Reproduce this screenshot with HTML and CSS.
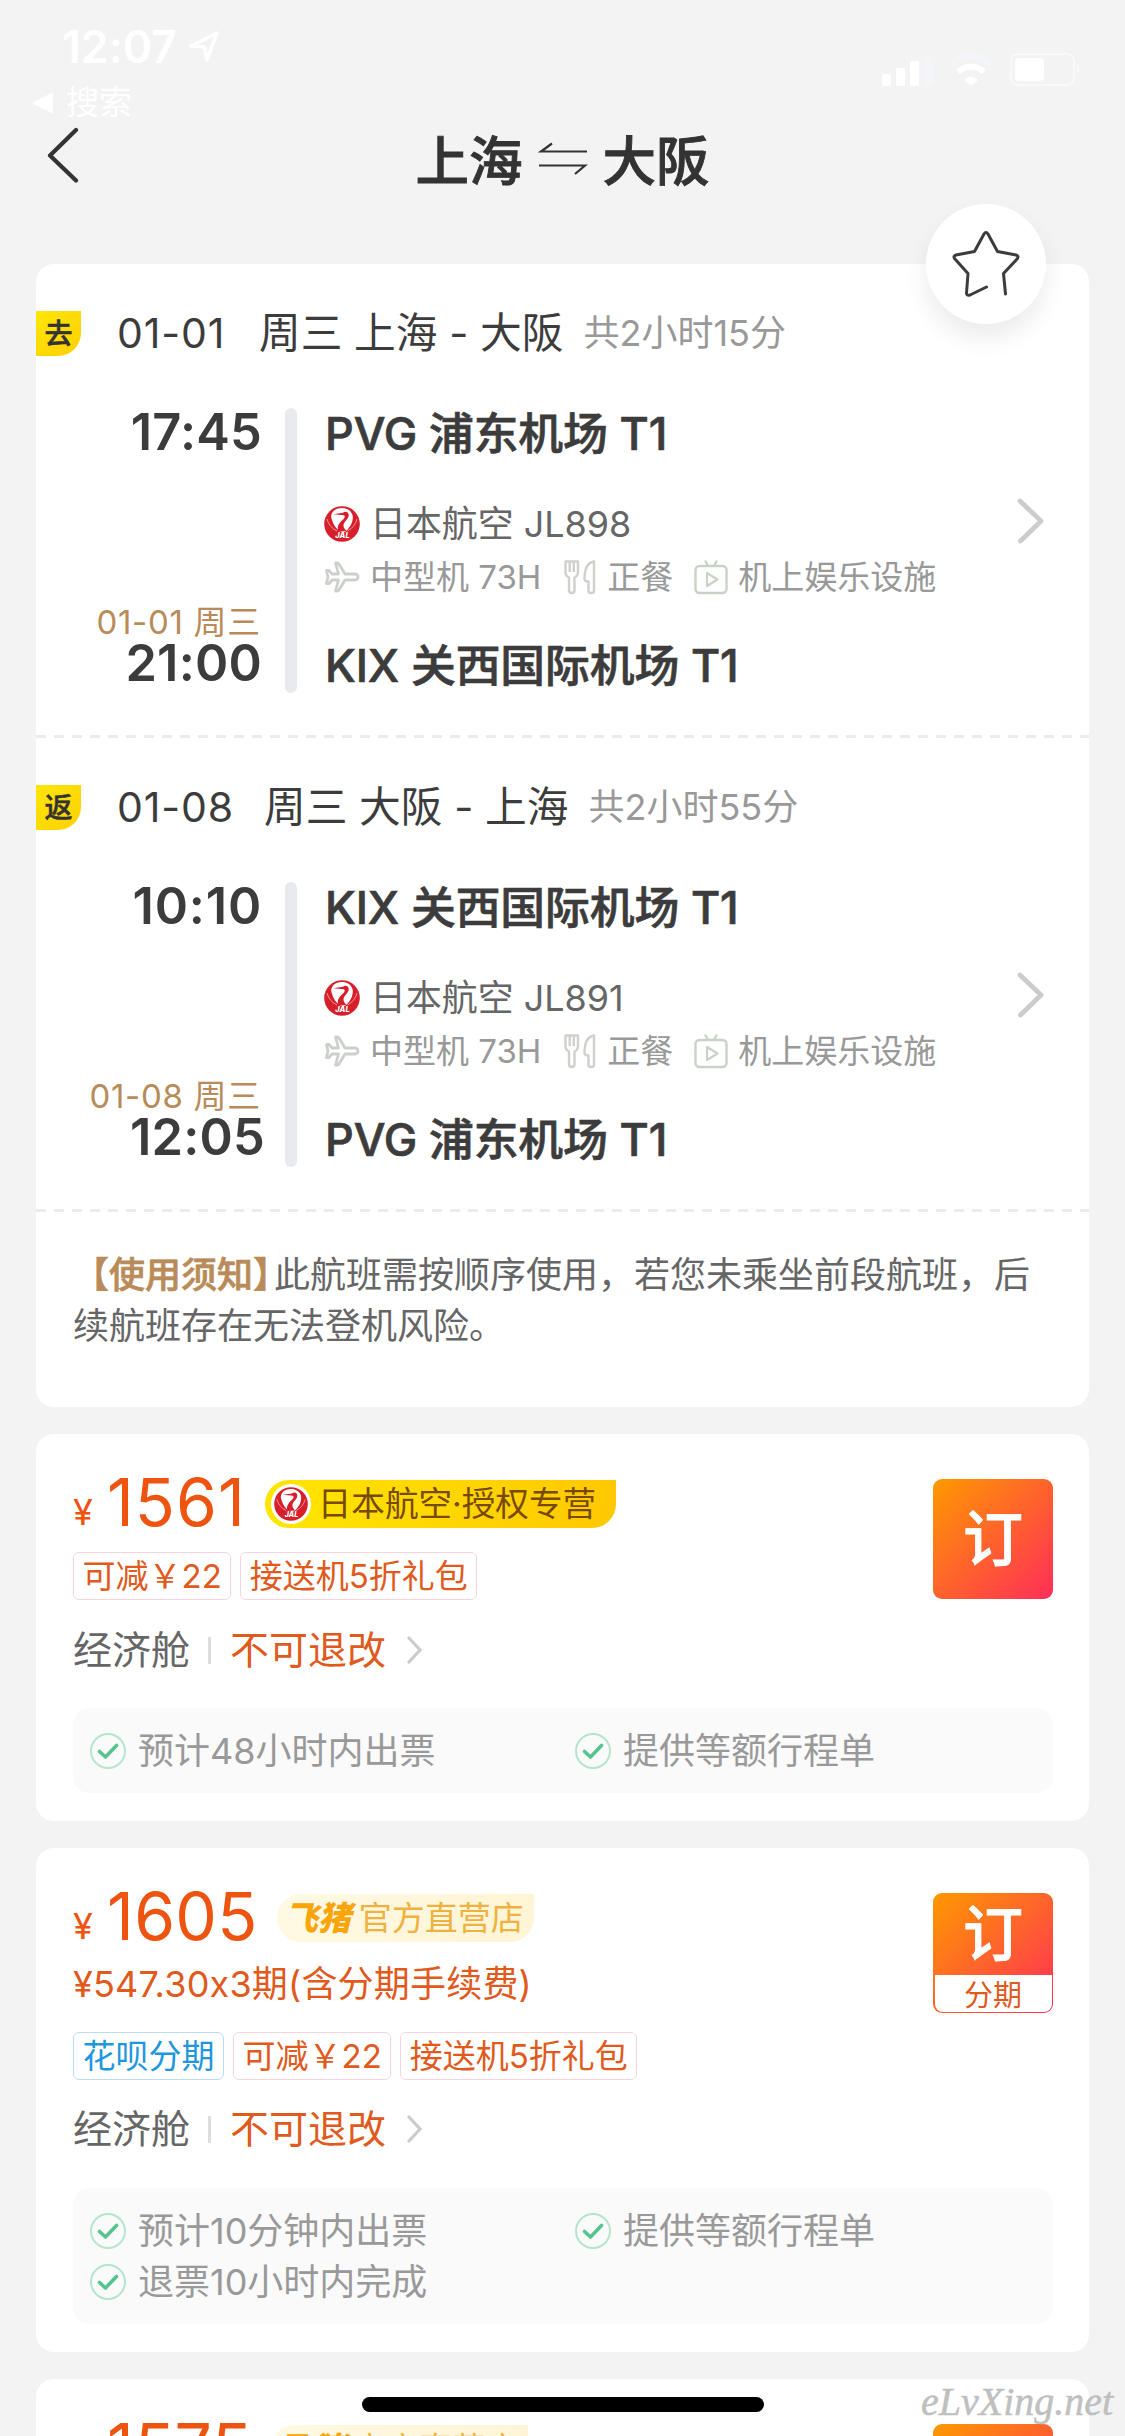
FILE: index.html
```html
<!DOCTYPE html>
<html lang="zh-CN">
<head>
<meta charset="utf-8">
<title>上海 - 大阪</title>
<link rel="stylesheet" href="styles.css">
</head>
<body>
<svg width="0" height="0" class="defs">
  <defs>
    <symbol id="jal" viewBox="0 0 36 36">
      <circle cx="18" cy="18" r="17.800" fill="#d71f2b"/>
      <path d="M18 2C9.500 2 5.500 8 8 14C9.500 19 12 22.500 15.500 25C19.500 27 21 26.500 24 23C28 18.500 29.500 13 28.500 9C27 4.500 23 2 18 2Z" fill="#fff"/>
      <path d="M9.500 8.300L19 6.800C21 5 24.500 5.800 24.700 9C25 13 19.500 15.500 19.500 19.500C19.500 22 21 23 22.500 25L14.500 25.500C12.500 21.500 14.500 17.500 18.500 14C21 11.800 21.500 10 19.800 9.200Z" fill="#d71f2b"/>
      <path d="M3 13Q5 21 13 25M33 13Q31 21 23.500 25" fill="none" stroke="#f3b5b8" stroke-width=".8"/>
      <text x="18.500" y="32" text-anchor="middle" font-family="Inter, sans-serif" font-size="7.500" font-weight="800" font-style="italic" fill="#fff">JAL</text>
    </symbol>
    <symbol id="plane" viewBox="0 0 36 32">
      <path d="M21 13H31Q34 13.500 34 16Q34 18.500 31 19H21L15 29Q14.500 30 13 30H11.500L14.500 19H8L5 22.500H2.500L4 16L2.500 9.500H5L8 13H14.500L11.500 2H13Q14.500 2 15 3Z" fill="none" stroke="#ccd0ca" stroke-width="2.800" stroke-linejoin="round"/>
    </symbol>
    <symbol id="meal" viewBox="0 0 34 36">
      <path d="M2.500 2.500V13Q2.500 17 6 18.500V31Q6 34 8.700 34Q11.500 34 11.500 31V18.500Q15 17 15 13V2.500ZM6.700 3V13M10.800 3V13M31 2.500Q21.500 4 21.500 20Q21.500 22.500 25.500 22.500V32Q25.500 34 28.300 34Q31 34 31 32Z" fill="none" stroke="#cfd1cc" stroke-width="2.400" stroke-linejoin="round"/>
    </symbol>
    <symbol id="tv" viewBox="0 0 34 36">
      <rect x="1.500" y="7" width="31" height="27" rx="4" fill="none" stroke="#c9d2c6" stroke-width="2.400"/>
      <path d="M11 1.500L14 6.500M23 1.500L20 6.500M13 14L23.500 20.500L13 27Z" fill="none" stroke="#c9d2c6" stroke-width="2.200" stroke-linejoin="round"/>
    </symbol>
    <symbol id="check" viewBox="0 0 36 36">
      <circle cx="18" cy="18" r="17" fill="none" stroke="#b5e6cd" stroke-width="2"/>
      <path d="M9.500 18.500L15.500 24L26.500 12.500" fill="none" stroke="#55c48f" stroke-width="3.600" stroke-linecap="round" stroke-linejoin="round"/>
    </symbol>
    <symbol id="go" viewBox="0 0 27 46">
      <path d="M3 3L24 23L3.500 43" fill="none" stroke="#ccc" stroke-width="4.800" stroke-linecap="round" stroke-linejoin="round"/>
    </symbol>
    <symbol id="go-small" viewBox="0 0 15 28">
      <path d="M2 2L13 14L2 26" fill="none" stroke="#ccc" stroke-width="3.200" stroke-linecap="round"/>
    </symbol>
  </defs>
</svg>
<main class="screen">
  <header class="top">
    <div class="status">
      <div class="clock">12:07<svg width="30" height="32" viewBox="0 0 30 32"><path d="M2 15L28 2L18 29L15.500 16Z" fill="none" stroke="#fff" stroke-width="3.500" stroke-linejoin="round"/></svg></div>
      <svg class="signals" width="202" height="36" viewBox="0 0 202 36">
        <rect x="1" y="22" width="9" height="12" rx="2" fill="#fff"/><rect x="15" y="16" width="9" height="18" rx="2" fill="#fff"/><rect x="29" y="9" width="9" height="25" rx="2" fill="#fff"/><rect x="43" y="3" width="9" height="31" rx="2" fill="#f4f5f8"/>
        <path d="M70 13Q90 -5 110 13" fill="none" stroke="#f4f5f8" stroke-width="6"/><path d="M77 20Q90 9 103 20" fill="none" stroke="#fff" stroke-width="6"/><path d="M83 28Q90 21 97 28L90 34Z" fill="#fff"/>
        <rect x="130" y="2" width="63" height="31" rx="7" fill="none" stroke="#f9f9f9" stroke-width="2"/><rect x="134" y="6" width="29" height="23" rx="4" fill="#fff"/><path d="M196 12Q201 17 196 23Z" fill="#f9f9f9"/>
      </svg>
    </div>
    <div class="return"><svg width="22" height="22" viewBox="0 0 22 22"><path d="M2 11L20 2V20Z" fill="#fff" stroke="#fff" stroke-width="2" stroke-linejoin="round"/></svg>搜索</div>
    <nav class="nav">
      <svg class="back" width="33" height="56" viewBox="0 0 33 56"><path d="M30 3L4 28.500L30 53.500" fill="none" stroke="#333" stroke-width="4.200" stroke-linecap="round" stroke-linejoin="round"/></svg>
      <h1 class="title">上海<svg width="50" height="34" viewBox="0 0 50 34"><path d="M49 9.500H3L14 1.500M1 23.500H47L37 32" fill="none" stroke="#333" stroke-width="2.200"/></svg>大阪</h1>
    </nav>
  </header>

  <section class="card trip">
    <button class="fav" aria-label="收藏"><svg width="68" height="68" viewBox="0 0 68 68"><path d="M34.500 57L18 65Q14.500 66 14.500 63L16 43.500L2.500 28.500Q1 26 4 25L22.500 21.500L32 4Q34 1 36 4L45.500 21.500L64 25Q67 26 65.500 28.500L51.500 43.500L53.500 64" fill="none" stroke="#3c3c3c" stroke-width="3" stroke-linecap="round" stroke-linejoin="round"/></svg></button>
    <article class="leg">
      <div class="leg-head"><span class="mark">去</span><span class="date">01-01</span><span class="route">周三 上海 - 大阪</span><span class="total">共2小时15分</span></div>
      <div class="leg-body">
        <div class="times"><b>17:45</b><div class="arrive"><small>01-01 周三</small><b>21:00</b></div></div>
        <i class="bar"></i>
        <div class="stops">
          <strong>PVG 浦东机场 T1</strong>
          <div class="flight">
            <div class="airline"><svg width="36" height="36"><use href="#jal"/></svg>日本航空 JL898</div>
            <div class="extras"><svg width="36" height="32"><use href="#plane"/></svg><span class="x1">中型机 73H</span><svg width="34" height="36"><use href="#meal"/></svg><span class="x2">正餐</span><svg width="34" height="36"><use href="#tv"/></svg><span>机上娱乐设施</span></div>
          </div>
          <strong>KIX 关西国际机场 T1</strong>
        </div>
        <svg class="go" width="27" height="46"><use href="#go"/></svg>
      </div>
    </article>
    <hr class="dash">
    <article class="leg">
      <div class="leg-head"><span class="mark">返</span><span class="date">01-08</span><span class="route">周三 大阪 - 上海</span><span class="total">共2小时55分</span></div>
      <div class="leg-body">
        <div class="times"><b class="wide">10:10</b><div class="arrive"><small>01-08 周三</small><b class="late">12:05</b></div></div>
        <i class="bar"></i>
        <div class="stops">
          <strong>KIX 关西国际机场 T1</strong>
          <div class="flight">
            <div class="airline"><svg width="36" height="36"><use href="#jal"/></svg>日本航空 JL891</div>
            <div class="extras"><svg width="36" height="32"><use href="#plane"/></svg><span class="x1">中型机 73H</span><svg width="34" height="36"><use href="#meal"/></svg><span class="x2">正餐</span><svg width="34" height="36"><use href="#tv"/></svg><span>机上娱乐设施</span></div>
          </div>
          <strong>PVG 浦东机场 T1</strong>
        </div>
        <svg class="go" width="27" height="46"><use href="#go"/></svg>
      </div>
    </article>
    <hr class="dash">
    <p class="notice"><b>【使用须知】</b>此航班需按顺序使用，若您未乘坐前段航班，后续航班存在无法登机风险。</p>
  </section>

  <section class="card offer">
    <div class="offer-top">
      <div class="info">
        <div class="price-row"><span class="yen">¥</span><span class="price">1561</span><span class="shop jal-shop"><i class="disc"><svg width="34" height="34"><use href="#jal"/></svg></i>日本航空·授权专营</span></div>
        <div class="tags"><span class="tag">可减￥22</span><span class="tag">接送机5折礼包</span></div>
      </div>
      <button class="book"><span class="book-main">订</span></button>
    </div>
    <div class="cabin"><span>经济舱</span><i class="sep"></i><span class="rule">不可退改</span><svg width="15" height="28"><use href="#go-small"/></svg></div>
    <ul class="perks"><li><svg width="36" height="36"><use href="#check"/></svg>预计48小时内出票</li><li><svg width="36" height="36"><use href="#check"/></svg>提供等额行程单</li></ul>
  </section>

  <section class="card offer second">
    <div class="offer-top">
      <div class="info">
        <div class="price-row"><span class="yen">¥</span><span class="price">1605</span><span class="shop fliggy"><em>飞猪</em>官方直营店</span></div>
        <div class="monthly">¥547.30x3期(含分期手续费)</div>
        <div class="tags"><span class="tag blue">花呗分期</span><span class="tag">可减￥22</span><span class="tag">接送机5折礼包</span></div>
      </div>
      <button class="book"><span class="book-main">订</span><span class="book-sub">分期</span></button>
    </div>
    <div class="cabin"><span>经济舱</span><i class="sep"></i><span class="rule">不可退改</span><svg width="15" height="28"><use href="#go-small"/></svg></div>
    <ul class="perks"><li><svg width="36" height="36"><use href="#check"/></svg>预计10分钟内出票</li><li><svg width="36" height="36"><use href="#check"/></svg>提供等额行程单</li><li><svg width="36" height="36"><use href="#check"/></svg>退票10小时内完成</li></ul>
  </section>

  <section class="card offer third">
    <div class="offer-top">
      <div class="info">
        <div class="price-row"><span class="yen">¥</span><span class="price">1575</span><span class="shop fliggy"><em>飞猪</em>官方直营店</span></div>
      </div>
      <button class="book"><span class="book-main">订</span></button>
    </div>
  </section>
  <div class="home-bar"></div>
  <div class="watermark">eLvXing.net</div>
</main>
</body>
</html>
```
FILE: styles.css
```css
* { box-sizing: border-box; margin: 0; padding: 0; }
body { background: #f3f3f3; font-family: Inter, "Noto Sans CJK SC", sans-serif; font-feature-settings: "calt" 0; color: #3c3c3c; }
.defs { position: absolute; }
svg { flex: none; display: block; }
i, em { font-style: normal; }
button { border: 0; font: inherit; }
span, small, b { white-space: nowrap; }

.screen { position: relative; width: 1125px; height: 2436px; overflow: hidden; display: flex; flex-direction: column; }
.top { height: 264px; flex: none; }
.status { display: flex; justify-content: space-between; height: 82px; padding: 20px 42px 0 62px; color: #fff; }
.clock { display: flex; gap: 12px; font-size: 44.500px; font-weight: 600; line-height: 54px; height: 54px; }
.clock svg { margin-top: 11px; }
.signals { margin-top: 32px; }
.return { display: flex; gap: 12px; height: 40px; padding-left: 32px; color: #fff; font-size: 33px; line-height: 40px; }
.return svg { margin-top: 10px; }
.nav { display: grid; grid-template-columns: 120px 1fr 120px; height: 80px; }
.back { margin: 5px 0 0 46px; }
.title { display: flex; justify-content: center; gap: 15px; font-size: 53.500px; font-weight: 500; line-height: 80px; color: #333; -webkit-text-stroke: .9px #333; }
.title svg { margin-top: 20px; }

.card { position: relative; flex: none; margin: 0 36px 27px; background: #fff; border-radius: 18px; }
.trip { height: 1143px; }
.fav { position: absolute; z-index: 1; right: 43px; top: -60px; width: 120px; height: 120px; border-radius: 50%; background: #fff; display: grid; place-items: center; box-shadow: 0 14px 24px rgba(0,0,0,.08); }
.leg { height: 471px; padding-top: 47px; }
.leg-head { display: flex; height: 45px; line-height: 45px; align-items: center; }
.mark { width: 45px; height: 45px; line-height: 46px; text-align: center; background: linear-gradient(135deg, #ffe60a, #ffcf00); border-radius: 0 0 23px 0; font-size: 28px; font-weight: 500; color: #333; -webkit-text-stroke: .5px #333; }
.date { margin-left: 36px; width: 142px; font-size: 41px; letter-spacing: .9px; }
.leg + .dash + .leg .date { width: 147px; }
.route { font-size: 41.700px; }
.total { margin-left: 20px; font-size: 36px; color: #999; }
.leg-body { display: flex; margin-top: 52px; height: 285px; }
.times { width: 226px; display: flex; flex-direction: column; justify-content: space-between; align-items: flex-end; text-align: right; }
.times b { display: block; font-size: 50.500px; font-weight: 600; line-height: 48px; letter-spacing: .2px; }
.times .wide { letter-spacing: .8px; }
.times .late { margin-right: -3px; }
.arrive { display: flex; flex-direction: column; align-items: flex-end; padding-bottom: 6px; }
.arrive small { margin-right: 1px; font-size: 33px; line-height: 34px; letter-spacing: .7px; color: #b98b58; }
.bar { width: 12px; margin: 0 28px 0 23px; border-radius: 6px; background: #e9eaef; }
.stops { width: 690px; display: flex; flex-direction: column; justify-content: space-between; padding: 2px 0 3px; }
.stops strong { font-size: 44.800px; font-weight: 500; line-height: 48px; white-space: nowrap; letter-spacing: -.1px; -webkit-text-stroke: .7px #3c3c3c; }
.flight { margin-top: 5px; }
.airline { display: flex; align-items: center; gap: 10px; height: 48px; line-height: 48px; font-size: 35.900px; color: #666; margin-left: -1px; }
.extras { display: flex; align-items: center; height: 58px; line-height: 58px; font-size: 33px; color: #999; margin-left: -1px; }
.x1 { margin: 0 22px 0 10px; }
.x2 { margin: 0 21px 0 10px; }
.extras span:last-child { margin-left: 10px; }
.go { margin: 90px 0 0 2px; }
.dash { border: 0; height: 3px; background: repeating-linear-gradient(90deg, #ececec 0 10px, transparent 10px 18px); }
.notice { padding: 38px 35px 0 37px; font-size: 36px; line-height: 51px; color: #666; }
.notice b { font-weight: 500; color: #b98b58; margin-right: -15px; -webkit-text-stroke: .7px #b98b58; }

.offer { height: 387px; padding: 43px 36px 0 37px; }
.offer-top { display: flex; justify-content: space-between; height: 126px; }
.price-row { display: flex; height: 52px; color: #ef5310; }
.yen { width: 34px; font-size: 36px; line-height: 40px; padding-top: 15px; }
.price { font-size: 66px; line-height: 50px; letter-spacing: 1px; }
.shop { display: flex; align-items: center; font-size: 33.600px; margin: 3px 0 0 19px; height: 48px; line-height: 48px; border-radius: 24px 0 24px 24px; }
.jal-shop { width: 351px; padding-left: 6px; gap: 7px; background: linear-gradient(90deg, #ffe600, #ffc800); color: #784a06; }
.disc { width: 40px; height: 40px; border-radius: 50%; background: #fff; display: grid; place-items: center; }
.fliggy { width: 257px; padding-left: 8px; gap: 8px; font-size: 33px; background: linear-gradient(90deg, #fff9e3, #fff5d6); color: #efb23e; }
.fliggy em { font-style: italic; font-weight: 900; color: #f9a50a; }
.tags { display: flex; gap: 9px; margin-top: 23px; }
.tag { height: 48px; padding: 0 8.500px; border: 1.500px solid #f8d6d9; border-radius: 6px; font-size: 33px; line-height: 47px; color: #df5a1c; }
.blue { color: #1e97dd; border-color: #b9def4; }
.book { display: flex; flex-direction: column; width: 120px; height: 120px; margin-top: 2px; border-radius: 9px; overflow: hidden; background: linear-gradient(135deg, #ff9900, #ff2d58); }
.book-main { flex: 1; display: grid; place-items: center; color: #fff; font-size: 60px; font-weight: 500; line-height: 60px; -webkit-text-stroke: .8px #fff; }
.book-sub { height: 37px; margin: 0 1.500px 1.500px; background: #fff; border-radius: 0 0 8px 8px; font-size: 29px; line-height: 41px; color: #df5a1c; text-align: center; }
.cabin { display: flex; align-items: center; height: 60px; margin-top: 17px; font-size: 39px; line-height: 60px; color: #666; }
.sep { width: 3px; height: 27px; margin: 0 19px 0 18px; background: #ddd; }
.rule { color: #df5a1c; margin-right: 21px; }
.perks { list-style: none; display: grid; grid-template-columns: 485px 1fr; grid-auto-rows: 51px; margin-top: 28px; padding: 17px; border-radius: 16px; background: #fafafa; font-size: 36px; line-height: 50px; color: #999; }
.perks li { display: flex; align-items: center; gap: 12px; white-space: nowrap; }
.second { height: 504px; }
.second .offer-top { height: 192px; }
.second .cabin { margin-top: 16px; }
.second .perks { margin-top: 29px; }
.monthly { font-size: 36px; line-height: 52px; margin-top: 15px; letter-spacing: .2px; color: #df5a1c; }
.second .tags { margin-top: 22px; }
.second .price, .third .price { letter-spacing: .3px; }
.third { height: 200px; margin-bottom: 0; }

.home-bar { position: absolute; left: 362px; top: 2397px; width: 402px; height: 15px; border-radius: 8px; background: #000; }
.watermark { position: absolute; left: 921px; top: 2376px; font: italic 40px/52px "Liberation Serif", serif; color: #bfbfbf; -webkit-text-stroke: .5px #bfbfbf; }
```
